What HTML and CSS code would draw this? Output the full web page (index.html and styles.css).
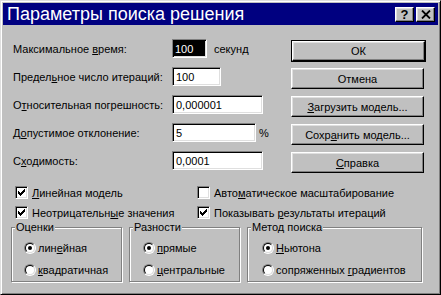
FILE: index.html
```html
<!DOCTYPE html>
<html lang="ru">
<head>
<meta charset="utf-8">
<title>Параметры поиска решения</title>
<link rel="stylesheet" href="styles.css">
</head>
<body>
<div class="window">
  <div class="titlebar">
    <span class="title">Параметры поиска решения</span>
    <div class="title-buttons">
      <span class="tbtn help">?</span>
      <span class="tbtn close"><svg width="10" height="9" viewBox="0 0 10 9"><path d="M1 0.5L9 8.5M9 0.5L1 8.5" stroke="#000" stroke-width="1.8" fill="none"/></svg></span>
    </div>
  </div>
  <div class="content">
    <div class="main">
      <div class="fields">
        <div class="row"><span class="label">Максимальное <u>в</u>ремя:</span><span class="input w35 selected"><span>100</span></span><span class="suffix sec">секунд</span></div>
        <div class="row"><span class="label">Предел<u>ь</u>ное число итераций:</span><span class="input w49">100</span></div>
        <div class="row"><span class="label">О<u>т</u>носительная погрешность:</span><span class="input w91">0,000001</span></div>
        <div class="row"><span class="label">Д<u>о</u>пустимое отклонение:</span><span class="input w84">5</span><span class="suffix pct">%</span></div>
        <div class="row"><span class="label">С<u>х</u>одимость:</span><span class="input w91">0,0001</span></div>
      </div>
      <div class="buttons">
        <div class="default"><span class="btn">ОК</span></div>
        <span class="btn">Отмена</span>
        <span class="btn"><u>З</u>агрузить модель...</span>
        <span class="btn">Сохр<u>а</u>нить модель...</span>
        <span class="btn"><u>С</u>правка</span>
      </div>
    </div>
    <div class="checks">
      <div class="check"><span class="box on"><svg width="9" height="9" viewBox="0 0 9 9"><path d="M1.5 3v3M2.5 4v3M3.5 5v3M4.5 4v3M5.5 3v3M6.5 2v3M7.5 1v3" stroke="#000" stroke-width="1" fill="none" shape-rendering="crispEdges"/></svg></span><span><u>Л</u>инейная модель</span></div>
      <div class="check"><span class="box"></span><span>Авто<u>м</u>атическое масштабирование</span></div>
      <div class="check"><span class="box on"><svg width="9" height="9" viewBox="0 0 9 9"><path d="M1.5 3v3M2.5 4v3M3.5 5v3M4.5 4v3M5.5 3v3M6.5 2v3M7.5 1v3" stroke="#000" stroke-width="1" fill="none" shape-rendering="crispEdges"/></svg></span><span>Неотрицательн<u>ы</u>е значения</span></div>
      <div class="check"><span class="box on"><svg width="9" height="9" viewBox="0 0 9 9"><path d="M1.5 3v3M2.5 4v3M3.5 5v3M4.5 4v3M5.5 3v3M6.5 2v3M7.5 1v3" stroke="#000" stroke-width="1" fill="none" shape-rendering="crispEdges"/></svg></span><span>Показывать <u>р</u>езультаты итераций</span></div>
    </div>
    <div class="groups">
      <div class="group g1">
        <span class="group-title">Оценки</span>
        <div class="opt"><span class="radio"><span class="ring"><span class="dot"></span></span></span><span>лин<u>е</u>йная</span></div>
        <div class="opt"><span class="radio"><span class="ring"></span></span><span><u>к</u>вадратичная</span></div>
      </div>
      <div class="group g2">
        <span class="group-title">Разности</span>
        <div class="opt"><span class="radio"><span class="ring"><span class="dot"></span></span></span><span><u>п</u>рямые</span></div>
        <div class="opt"><span class="radio"><span class="ring"></span></span><span><u>ц</u>ентральные</span></div>
      </div>
      <div class="group g3">
        <span class="group-title">Метод поиска</span>
        <div class="opt"><span class="radio"><span class="ring"><span class="dot"></span></span></span><span><u>Н</u>ьютона</span></div>
        <div class="opt"><span class="radio"><span class="ring"></span></span><span>сопряженных <u>г</u>радиентов</span></div>
      </div>
    </div>
  </div>
</div>
</body>
</html>
```
FILE: styles.css
```css
* { box-sizing: border-box; }
html, body { margin: 0; padding: 0; }
body {
  background: #c0c0c0;
  font-family: "Liberation Sans", Arial, sans-serif;
  font-size: 11px;
  color: #000;
}
u { text-underline-offset: 1px; }

.window {
  width: 441px;
  height: 295px;
  background: #c0c0c0;
  border: 1px solid;
  border-color: #dfdfdf #000 #000 #dfdfdf;
  box-shadow: inset 1px 1px #fff, inset -1px -1px #808080;
  padding: 2px;
  display: flex;
  flex-direction: column;
}

.titlebar {
  flex: none;
  height: 22px;
  background: #000080;
  display: flex;
  align-items: center;
  justify-content: space-between;
  padding: 0 3px 0 4px;
}
.title {
  color: #fff;
  font-size: 18px;
  line-height: 22px;
  white-space: nowrap;
}
.title-buttons { display: flex; gap: 2px; }
.tbtn {
  width: 19px;
  height: 15px;
  background: #c0c0c0;
  border: 1px solid;
  border-color: #fff #000 #000 #fff;
  box-shadow: inset -1px -1px #808080, inset 1px 1px #dfdfdf;
  display: flex;
  align-items: center;
  justify-content: center;
}
.help { font-weight: bold; font-size: 13px; line-height: 13px; }

.content { padding-top: 14px; }

.main {
  display: grid;
  grid-template-columns: 278px 135px;
  padding-left: 10px;
}
.fields { display: flex; flex-direction: column; gap: 9px; }
.row { display: flex; align-items: center; height: 19px; }
.label { width: 159px; white-space: nowrap; }
.input {
  height: 19px;
  background: #fff;
  border: 1px solid;
  border-color: #808080 #fff #fff #808080;
  box-shadow: inset 1px 1px #000, inset -1px -1px #dfdfdf;
  padding: 0 3px;
  display: flex;
  align-items: center;
  white-space: nowrap;
}
.input.selected { background: #000; color: #fff; padding-left: 2px; }
.w35 { width: 35px; }
.w49 { width: 49px; }
.w84 { width: 84px; }
.w91 { width: 91px; }
.sec { margin-left: 7px; }
.pct { margin-left: 3px; }

.buttons {
  display: flex;
  flex-direction: column;
  gap: 7px;
  margin-top: 1px;
}
.default {
  border: 1px solid #000;
  margin-bottom: -1px;
}
.btn {
  height: 21px;
  width: 133px;
  display: flex;
  align-items: center;
  justify-content: center;
  background: #c0c0c0;
  border: 1px solid;
  border-color: #fff #000 #000 #fff;
  box-shadow: inset -1px -1px #808080, inset 1px 1px #dfdfdf;
  white-space: nowrap;
}
.default .btn { height: 20px; }

.checks {
  margin-top: 13px;
  padding-left: 12px;
  display: grid;
  grid-template-columns: 182px auto;
  row-gap: 7px;
}
.check { display: flex; align-items: center; gap: 4px; height: 13px; white-space: nowrap; }
.box {
  flex: none;
  width: 13px;
  height: 13px;
  background: #fff;
  border: 1px solid;
  border-color: #808080 #fff #fff #808080;
  box-shadow: inset 1px 1px #000, inset -1px -1px #dfdfdf;
  padding: 1px;
  display: flex;
}
.box svg { display: block; }

.groups {
  margin-top: 8px;
  padding-left: 8px;
  display: flex;
  gap: 7px;
}
.group {
  position: relative;
  height: 55px;
  border: 1px solid #808080;
  box-shadow: inset 1px 1px #fff, 1px 1px #fff;
  padding: 13px 0 0 12px;
  display: flex;
  flex-direction: column;
  gap: 8px;
}
.g1 { width: 111px; }
.g2 { width: 111px; padding-left: 13px; }
.g3 { width: 175px; padding-left: 14px; }
.group-title {
  position: absolute;
  top: -8px;
  left: 3px;
  background: #c0c0c0;
  padding: 0 1px;
  line-height: 14px;
  white-space: nowrap;
}
.opt { display: flex; align-items: center; gap: 2px; height: 14px; white-space: nowrap; }
.radio {
  flex: none;
  width: 12px;
  height: 12px;
  border-radius: 50%;
  border: 1px solid;
  border-color: #808080 #fff #fff #808080;
  display: flex;
}
.ring {
  flex: 1;
  border-radius: 50%;
  border: 1px solid;
  border-color: #000 #dfdfdf #dfdfdf #000;
  background: #fff;
  display: flex;
  align-items: center;
  justify-content: center;
}
.dot { width: 4px; height: 4px; border-radius: 50%; background: #000; }
```
